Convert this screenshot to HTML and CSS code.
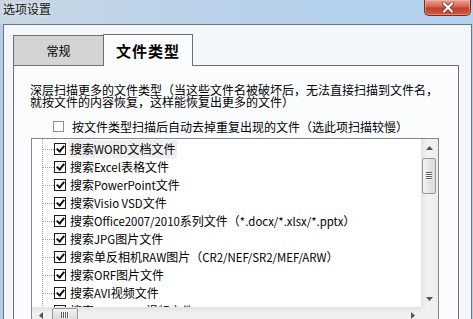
FILE: index.html
```html
<!DOCTYPE html>
<html lang="zh-CN">
<head>
  <meta charset="UTF-8" />
  <title>选项设置</title>
  <link rel="stylesheet" href="styles.css">
</head>
<body>
  <!-- Title bar -->
  <div class="titlebar">
    <span class="title">选项设置</span>
    <button class="close">
      <svg width="14" height="11" viewBox="0 0 14 11">
        <path d="M3 1.5 L11 9.5 M11 1.5 L3 9.5" stroke="#5a1a12" stroke-width="4" stroke-linecap="round" fill="none" opacity="0.55"/>
        <path d="M3 1.5 L11 9.5 M11 1.5 L3 9.5" stroke="#fff" stroke-width="2.2" stroke-linecap="round" fill="none"/>
      </svg>
    </button>
  </div>

  <!-- Dialog body -->
  <div class="client">
    <div class="tabs">
      <div class="tab">常规</div>
      <div class="tab active">文件类型</div>
    </div>

    <div class="panel">
      <p class="desc">深层扫描更多的文件类型（当这些文件名被破坏后，无法直接扫描到文件名，<br>就按文件的内容恢复，这样能恢复出更多的文件）</p>

      <label class="option">
        <span class="box"></span>
        <span>按文件类型扫描后自动去掉重复出现的文件（选此项扫描较慢）</span>
      </label>

      <div class="listbox">
        <ul class="items">
          <li class="row hot"><span class="branch"></span><span class="chk"></span><span class="label">搜索<span class="en">WORD</span>文档文件</span></li>
          <li class="row"><span class="branch"></span><span class="chk"></span><span class="label">搜索<span class="en">Excel</span>表格文件</span></li>
          <li class="row"><span class="branch"></span><span class="chk"></span><span class="label">搜索<span class="en">PowerPoint</span>文件</span></li>
          <li class="row"><span class="branch"></span><span class="chk"></span><span class="label">搜索<span class="en">Visio VSD</span>文件</span></li>
          <li class="row"><span class="branch"></span><span class="chk"></span><span class="label">搜索<span class="en">Office2007/2010</span>系列文件（<span class="en">*.docx/*.xlsx/*.pptx</span>）</span></li>
          <li class="row"><span class="branch"></span><span class="chk"></span><span class="label">搜索<span class="en">JPG</span>图片文件</span></li>
          <li class="row"><span class="branch"></span><span class="chk"></span><span class="label">搜索单反相机<span class="en">RAW</span>图片（<span class="en">CR2/NEF/SR2/MEF/ARW</span>）</span></li>
          <li class="row"><span class="branch"></span><span class="chk"></span><span class="label">搜索<span class="en">ORF</span>图片文件</span></li>
          <li class="row"><span class="branch"></span><span class="chk"></span><span class="label">搜索<span class="en">AVI</span>视频文件</span></li>
          <li class="row"><span class="branch"></span><span class="chk"></span><span class="label">搜索<span class="en">MP4/MOV</span>视频文件</span></li>
        </ul>

        <div class="vscroll">
          <div class="arrow">
            <svg width="7" height="4" viewBox="0 0 7 4"><path d="M0 4 L3.5 0 L7 4 Z" fill="#555"/></svg>
          </div>
          <div class="thumb"><span class="grip"></span></div>
          <div class="track"></div>
          <div class="arrow">
            <svg width="7" height="4" viewBox="0 0 7 4"><path d="M0 0 L3.5 4 L7 0 Z" fill="#555"/></svg>
          </div>
        </div>

        <div class="hscroll">
          <div class="arrow">
            <svg width="4" height="7" viewBox="0 0 4 7"><path d="M4 0 L0 3.5 L4 7 Z" fill="#555"/></svg>
          </div>
          <div class="thumb"><span class="grip"></span></div>
          <div class="track"></div>
          <div class="arrow">
            <svg width="4" height="7" viewBox="0 0 4 7"><path d="M0 0 L4 3.5 L0 7 Z" fill="#555"/></svg>
          </div>
        </div>

        <div class="corner"></div>
      </div>
    </div>
  </div>
</body>
</html>
```

FILE: styles.css
```css
:root {
  --frame: #b9cce0;
  --client-bg: #f3f6fb;
  --panel-bg: #fbfcfe;
  --tab-border: #6f6f6f;
  --tab-off: #d4d4d4;
  --list-border: #828790;
  --scroll-bg: #eeeeee;
}

body {
  margin: 0;
  width: 473px;
  height: 319px;
  overflow: hidden;
  background: var(--frame);
  font-family: "Noto Sans CJK SC", sans-serif;
  font-size: 12px;
  color: #000;
}

/* Title bar */
.titlebar {
  height: 24px;
  display: flex;
  justify-content: space-between;
  align-items: flex-start;
  background: linear-gradient(to right, #c9d6e3 0%, #c0d3e7 25%, #b6d0ec 60%, #b3d0ef 100%);
}

.title {
  padding: 3px 0 0 3px;
  line-height: 12px;
  color: #111;
  text-shadow: 0 0 4px rgba(255, 255, 255, 0.9);
}

.close {
  width: 47px;
  height: 16px;
  margin-right: 2px;
  padding: 0;
  border: 1px solid #7c2b21;
  border-top: none;
  border-radius: 0 0 5px 5px;
  background: linear-gradient(#e5a290 0%, #d66c56 40%, #c2412c 55%, #cf5a3f 100%);
  box-shadow: inset 0 0 0 1px rgba(255, 200, 180, 0.45);
  display: flex;
  justify-content: center;
  align-items: center;
}

/* Client area */
.client {
  height: 296px;
  margin: 0 1px 0 3px;
  padding: 9px 12px 0 9px;
  border: 1px solid #66778a;
  border-bottom: none;
  background: var(--client-bg);
}

.tabs {
  display: flex;
  align-items: flex-end;
  height: 31px;
}

.tab {
  box-sizing: border-box;
  width: 91px;
  height: 30px;
  border: 1px solid var(--tab-border);
  border-bottom: none;
  background: var(--tab-off);
  display: flex;
  justify-content: center;
  align-items: center;
  line-height: 12px;
}

.tab.active {
  position: relative;
  z-index: 1;
  width: 90px;
  height: 32px;
  margin: 0 0 -1px -1px;
  background: var(--panel-bg);
  font-size: 15px;
  font-weight: bold;
  letter-spacing: 1px;
}

.panel {
  height: 260px;
  padding: 18px 0 0 16px;
  border: 1px solid var(--tab-border);
  background: var(--panel-bg);
}

.desc {
  margin: 0;
  line-height: 12px;
  white-space: nowrap;
}

.option {
  display: flex;
  align-items: center;
  gap: 8px;
  height: 14px;
  margin: 11px 0 0 23px;
  white-space: nowrap;
}

.box {
  box-sizing: border-box;
  width: 11px;
  height: 11px;
  border: 1px solid #8e8f8f;
  background: #fff;
}

/* List with tree lines */
.listbox {
  width: 406px;
  height: 185px;
  margin: 5px 0 0 1px;
  border: 1px solid var(--list-border);
  background: #fff;
  display: grid;
  grid-template-columns: 1fr 17px;
  grid-template-rows: 1fr 17px;
}

.items {
  list-style: none;
  margin: 0;
  padding: 1px 0 0 0;
  overflow: hidden;
  background-image: repeating-linear-gradient(to bottom, #a0a0a0 0 1px, transparent 1px 2px);
  background-size: 1px 100%;
  background-position: 10px 0;
  background-repeat: no-repeat;
}

.row {
  display: flex;
  align-items: center;
  height: 18px;
  padding-left: 11px;
  white-space: nowrap;
}

.branch {
  width: 11px;
  height: 0;
  border-top: 1px dotted #a0a0a0;
}

.chk {
  position: relative;
  box-sizing: border-box;
  width: 12px;
  height: 12px;
  margin-right: 2px;
  border: 1px solid #1e1e1e;
  background: #fff;
}

.chk::after {
  content: "";
  position: absolute;
  left: 3px;
  top: 0;
  width: 3px;
  height: 6px;
  border: solid #111;
  border-width: 0 2px 2px 0;
  transform: rotate(40deg);
}

.label {
  padding: 0 2px;
  line-height: 17px;
}

.en {
  font-size: 11.4px;
}

.row.hot .label {
  background: #efefef;
}

/* Scrollbars */
.vscroll, .hscroll {
  display: flex;
  background: var(--scroll-bg);
}

.vscroll {
  flex-direction: column;
  background: linear-gradient(to right, #e3e3e3, #f2f2f2 40%, #ececec);
}

.hscroll {
  background: linear-gradient(#e3e3e3, #f2f2f2 40%, #ececec);
}

.arrow {
  flex: 0 0 17px;
  display: flex;
  justify-content: center;
  align-items: center;
}

.track {
  flex: 1;
}

.thumb {
  box-sizing: border-box;
  border: 1px solid #979797;
  border-radius: 2px;
  display: flex;
  justify-content: center;
  align-items: center;
}

.vscroll .thumb {
  height: 36px;
  margin: 2px 2px 0 1px;
  background: linear-gradient(to right, #f4f4f4, #e4e4e4 50%, #d8d8d8);
}

.hscroll .thumb {
  width: 26px;
  margin: 1px 0 2px 3px;
  background: linear-gradient(#f4f4f4, #e4e4e4 50%, #d8d8d8);
}

.grip {
  display: block;
}

.vscroll .grip {
  width: 6px;
  height: 8px;
  background: repeating-linear-gradient(to bottom, #5d5d5d 0 1px, #fafafa 1px 2px);
}

.hscroll .grip {
  width: 8px;
  height: 6px;
  background: repeating-linear-gradient(to right, #5d5d5d 0 1px, #fafafa 1px 2px);
}

.corner {
  background: #f0f0f0;
}
```
